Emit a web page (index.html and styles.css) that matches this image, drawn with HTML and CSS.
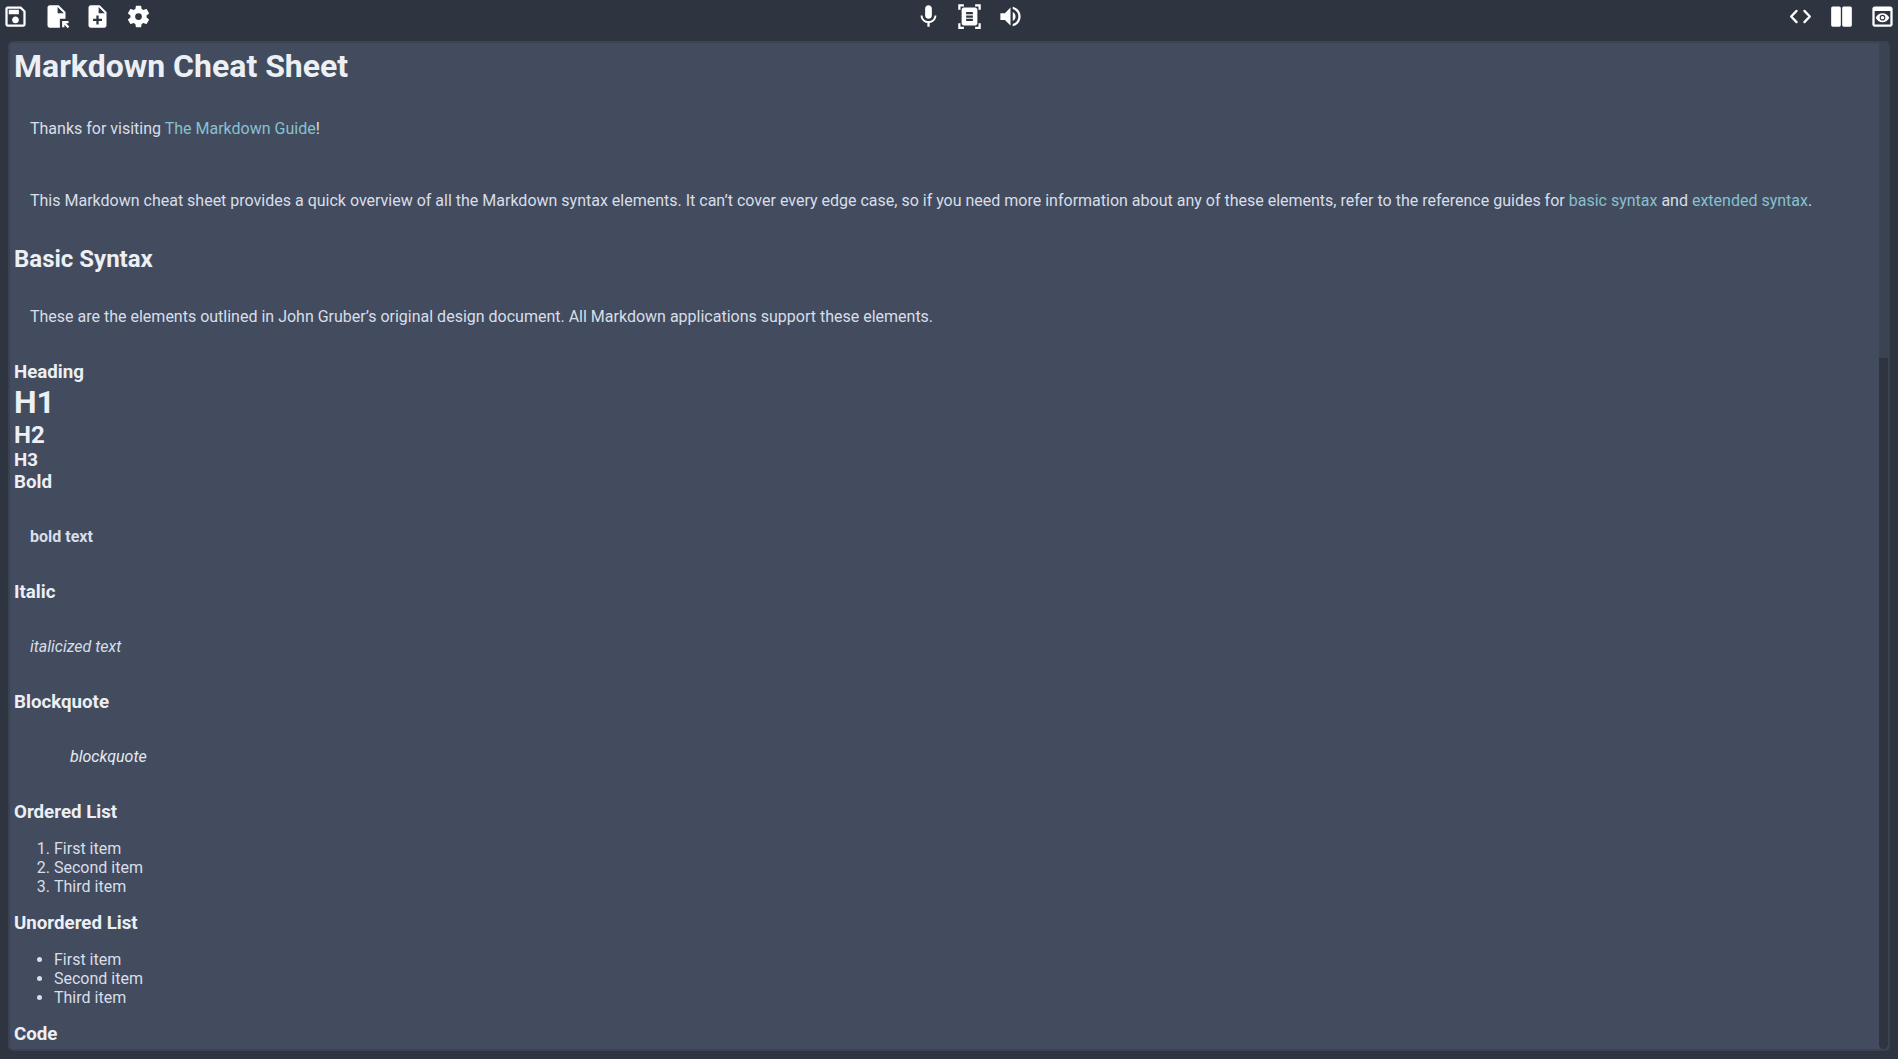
FILE: index.html
```html
<!DOCTYPE html>
<html lang="en">
<head>
<meta charset="utf-8">
<title>Markdown Cheat Sheet</title>
<link rel="stylesheet" href="styles.css">
</head>
<body>
<header class="toolbar">
  <div class="group">
    <button type="button" aria-label="Save"><svg viewBox="0 0 24 24"><path d="M17 3H5c-1.11 0-2 .9-2 2v14c0 1.1.89 2 2 2h14c1.1 0 2-.9 2-2V7l-4-4zm2 16H5V5h11.17L19 7.83V19zm-7-7c-1.66 0-3 1.34-3 3s1.34 3 3 3 3-1.34 3-3-1.34-3-3-3zM6 6h9v4H6V6z"/></svg></button>
    <button type="button" aria-label="Open file"><svg viewBox="0 0 24 24"><path d="M14 2H6c-1.1 0-1.99.9-1.99 2L4 20c0 1.1.89 2 1.99 2H15v-8h5V8l-6-6zm-1 7V3.5L18.500 9H13zm4 12.660V16h5.660v2h-2.240l2.950 2.950-1.410 1.410L19 19.410v2.240h-2z"/></svg></button>
    <button type="button" aria-label="New file"><svg viewBox="0 0 24 24"><path d="M14 2H6c-1.100 0-1.990.9-1.990 2L4 20c0 1.100.89 2 1.990 2H18c1.100 0 2-.9 2-2V8l-6-6zm2 14h-3v3h-2v-3H8v-2h3v-3h2v3h3v2zm-3-7V3.500L18.500 9H13z"/></svg></button>
    <button type="button" aria-label="Settings"><svg viewBox="0 0 24 24"><path d="M19.140 12.940c.04-.3.06-.61.06-.94 0-.32-.02-.64-.07-.94l2.030-1.580c.18-.14.23-.41.12-.61l-1.920-3.320c-.12-.22-.37-.29-.59-.22l-2.390.96c-.5-.38-1.030-.7-1.620-.94l-.36-2.540c-.04-.24-.24-.41-.48-.41h-3.840c-.24 0-.43.17-.47.41l-.36 2.540c-.59.24-1.130.57-1.620.94l-2.390-.96c-.22-.08-.47 0-.59.22L2.740 8.870c-.12.21-.08.47.12.61l2.030 1.580c-.05.3-.09.63-.09.94s.02.64.07.94l-2.030 1.580c-.18.14-.23.41-.12.61l1.920 3.320c.12.22.37.29.59.22l2.390-.96c.5.38 1.030.7 1.620.94l.36 2.540c.05.24.24.41.48.41h3.840c.24 0 .44-.17.47-.41l.36-2.540c.59-.24 1.130-.56 1.620-.94l2.390.96c.22.08.47 0 .59-.22l1.920-3.320c.12-.22.07-.47-.12-.61l-2.010-1.580zM12 15a3 3 0 1 1 0-6 3 3 0 0 1 0 6z"/></svg></button>
  </div>
  <div class="group">
    <button type="button" aria-label="Dictate"><svg viewBox="0 0 24 24"><path d="M12 14c1.660 0 2.990-1.340 2.990-3L15 5c0-1.660-1.340-3-3-3S9 3.340 9 5v6c0 1.660 1.340 3 3 3zm5.300-3c0 3-2.540 5.100-5.300 5.100S6.700 14 6.700 11H5c0 3.410 2.720 6.230 6 6.720V21h2v-3.280c3.280-.48 6-3.300 6-6.720h-1.700z"/></svg></button>
    <button type="button" aria-label="Scan document"><svg viewBox="0 0 24 24"><path d="M7 3H4v3H2V1h5v2zm15 3V1h-5v2h3v3h2zM7 21H4v-3H2v5h5v-2zm13-3v3h-3v2h5v-5h-2zm-1 0c0 1.100-.9 2-2 2H7c-1.100 0-2-.9-2-2V6c0-1.100.9-2 2-2h10c1.100 0 2 .9 2 2v12zM15 8H9v2h6V8zm0 3H9v2h6v-2zm0 3H9v2h6v-2z"/></svg></button>
    <button type="button" aria-label="Read aloud"><svg viewBox="0 0 24 24"><path d="M3 9v6h4l5 5V4L7 9H3zm13.500 3c0-1.770-1.020-3.290-2.500-4.030v8.050c1.480-.73 2.500-2.250 2.500-4.020zM14 3.230v2.060c2.890.86 5 3.540 5 6.710s-2.110 5.850-5 6.710v2.060c4.010-.91 7-4.490 7-8.770s-2.990-7.860-7-8.770z"/></svg></button>
  </div>
  <div class="group">
    <button type="button" aria-label="Code view"><svg viewBox="0 0 24 24"><path class="line" d="M8.500 7 3.700 12l4.800 5M15.500 7l4.800 5-4.800 5"/></svg></button>
    <button type="button" aria-label="Split view"><svg viewBox="0 0 24 24"><rect x="2.800" y="3" width="8.600" height="18" rx="1.400"/><rect x="12.600" y="3" width="8.600" height="18" rx="1.400"/></svg></button>
    <button type="button" aria-label="Preview"><svg viewBox="0 0 24 24"><path d="M19 3H5c-1.110 0-2 .9-2 2v14c0 1.100.89 2 2 2h14c1.100 0 2-.9 2-2V5c0-1.100-.9-2-2-2zm0 16H5V7h14v12zm-5.500-6c0 .83-.67 1.500-1.500 1.500s-1.500-.67-1.500-1.500.67-1.500 1.500-1.500 1.500.67 1.500 1.500zM12 9c-2.730 0-5.060 1.660-6 4 .94 2.340 3.270 4 6 4s5.060-1.660 6-4c-.94-2.340-3.270-4-6-4zm0 6.500a2.500 2.500 0 0 1 0-5 2.500 2.500 0 0 1 0 5z"/></svg></button>
  </div>
</header>
<main class="panel">
  <div class="document">
    <h1>Markdown Cheat Sheet</h1>
    <p>Thanks for visiting <a href="#guide">The Markdown Guide</a>!</p>
    <p>This Markdown cheat sheet provides a quick overview of all the Markdown syntax elements. It can’t cover every edge case, so if you need more information about any of these elements, refer to the reference guides for <a href="#basic">basic syntax</a> and <a href="#extended">extended syntax</a>.</p>
    <h2 id="basic">Basic Syntax</h2>
    <p>These are the elements outlined in John Gruber’s original design document. All Markdown applications support these elements.</p>
    <h3>Heading</h3>
    <h1>H1</h1>
    <h2>H2</h2>
    <h3>H3</h3>
    <h3>Bold</h3>
    <p><strong>bold text</strong></p>
    <h3>Italic</h3>
    <p><em>italicized text</em></p>
    <h3>Blockquote</h3>
    <blockquote><p>blockquote</p></blockquote>
    <h3>Ordered List</h3>
    <ol>
      <li>First item</li>
      <li>Second item</li>
      <li>Third item</li>
    </ol>
    <h3>Unordered List</h3>
    <ul>
      <li>First item</li>
      <li>Second item</li>
      <li>Third item</li>
    </ul>
    <h3>Code</h3>
  </div>
  <div class="scrollbar"><div class="thumb"></div></div>
</main>
</body>
</html>
```
FILE: styles.css
```css
* {
  box-sizing: border-box;
}

body {
  display: flex;
  flex-direction: column;
  height: 100vh;
  margin: 0;
  background: #2e3440;
  color: #d8dee9;
  font-family: Roboto, sans-serif;
  font-size: 16px;
}

.toolbar {
  display: flex;
  justify-content: space-between;
  padding: 3px 2px;
}

.group {
  display: flex;
  gap: 14px;
}

.group button {
  display: flex;
  padding: 0;
  border: 0;
  background: none;
  color: #fff;
  cursor: pointer;
}

.group svg {
  width: 27px;
  height: 27px;
  fill: currentColor;
}

.group .line {
  fill: none;
  stroke: currentColor;
  stroke-width: 2;
  stroke-linecap: round;
  stroke-linejoin: round;
}

.panel {
  display: flex;
  flex: 1;
  min-height: 0;
  margin: 8px;
  overflow: hidden;
  border: 2px solid #3b4252;
  border-radius: 5px;
  background: #434c5e;
}

.document {
  flex: 1;
  padding: 4px;
  overflow: hidden;
}

h1,
h2,
h3 {
  margin: 0;
  color: #eceff4;
}

p {
  margin: 16px 0;
  padding: 16px;
  line-height: 24px;
}

blockquote {
  margin: 16px 40px;
  color: #e5e9f0;
  font-style: italic;
}

ol,
ul {
  margin: 16px 0;
  padding-left: 40px;
}

a {
  color: #88c0d0;
  text-decoration: none;
}

.scrollbar {
  width: 9px;
  border-radius: 5px;
  background: #2e3440;
}

.thumb {
  height: 31.3%;
  background: #3b4252;
}
```
